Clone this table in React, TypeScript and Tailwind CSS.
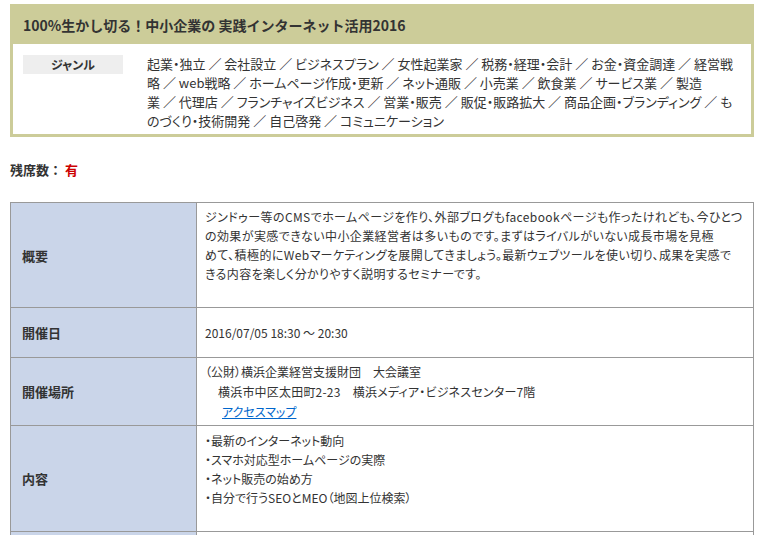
export default function App() {
  const genreLines = [
    "起業・独立 ／ 会社設立 ／ ビジネスプラン ／ 女性起業家 ／ 税務・経理・会計 ／ お金・資金調達 ／ 経営戦",
    "略 ／ web戦略 ／ ホームページ作成・更新 ／ ネット通販 ／ 小売業 ／ 飲食業 ／ サービス業 ／ 製造",
    "業 ／ 代理店 ／ フランチャイズビジネス ／ 営業・販売 ／ 販促・販路拡大 ／ 商品企画・ブランディング ／ も",
    "のづくり・技術開発 ／ 自己啓発 ／ コミュニケーション",
  ];

  const summaryLines = [
    "ジンドゥー等のCMSでホームページを作り、外部ブログもfacebookページも作ったけれども、今ひとつ",
    "の効果が実感できない中小企業経営者は多いものです。まずはライバルがいない成長市場を見極",
    "めて、積極的にWebマーケティングを展開してきましょう。最新ウェブツールを使い切り、成果を実感で",
    "きる内容を楽しく分かりやすく説明するセミナーです。",
  ];

  const contents = [
    "・最新のインターネット動向",
    "・スマホ対応型ホームページの実際",
    "・ネット販売の始め方",
    "・自分で行うSEOとMEO（地図上位検索）",
  ];

  return (
    <div className="min-h-[535px] bg-white px-[10px] pt-[4px] text-[#333] font-['Noto_Sans_CJK_JP',sans-serif] [font-feature-settings:'palt']">
      {/* Seminar header */}
      <section className="w-[744px] border-[3px] border-t-0 border-[#cccc99]">
        <h1 className="h-[40px] bg-[#cccc99] pl-[10px] text-[14px] font-bold leading-[42px] [font-feature-settings:normal]">
          100%生かし切る！中小企業の 実践インターネット活用2016
        </h1>
        <div className="flex bg-white pl-[10px] pt-[10px] pb-[4px]">
          <div className="mt-[1px] h-[19px] w-[100px] shrink-0 bg-[#eeeeee] text-center text-[12px] font-bold leading-[19px]">
            ジャンル
          </div>
          <p className="ml-[24px] text-[13px] leading-[19px]">
            {genreLines.map((line, i) => (
              <span key={i} className="block whitespace-nowrap">
                {line}
              </span>
            ))}
          </p>
        </div>
      </section>

      {/* Seats */}
      <p className="mt-[23px] text-[13px] font-bold leading-[19px] [font-feature-settings:normal]">
        残席数： <span className="text-[#cc0000]">有</span>
      </p>

      {/* Detail table */}
      <table className="mt-[23px] w-[744px] border-collapse text-[12px] leading-[19px]">
        <tbody>
          <tr className="h-[105px]">
            <th className="w-[186px] border border-[#999] bg-[#cad5e9] pl-[11px] text-left align-middle text-[13px] font-bold">
              概要
            </th>
            <td className="border border-[#999] pl-[8px] pt-[4px] align-top tracking-[0.4px]">
              {summaryLines.map((line, i) => (
                <span key={i} className="block whitespace-nowrap">
                  {line}
                </span>
              ))}
            </td>
          </tr>
          <tr className="h-[50px]">
            <th className="border border-[#999] bg-[#cad5e9] pl-[11px] text-left align-middle text-[13px] font-bold">
              開催日
            </th>
            <td className="border border-[#999] pl-[8px] align-middle">
              2016/07/05 18:30 ～ 20:30
            </td>
          </tr>
          <tr className="h-[68px]">
            <th className="border border-[#999] bg-[#cad5e9] pl-[11px] text-left align-middle text-[13px] font-bold">
              開催場所
            </th>
            <td className="border border-[#999] pl-[8px] align-middle leading-[20px]">
              <span className="block">（公財）横浜企業経営支援財団　大会議室</span>
              <span className="block pl-[13px] tracking-[0.2px]">
                横浜市中区太田町2-23　横浜メディア・ビジネスセンター7階
              </span>
              <a href="#" className="block pl-[17px] text-[#0066cc] underline">
                アクセスマップ
              </a>
            </td>
          </tr>
          <tr className="h-[106px]">
            <th className="border border-[#999] bg-[#cad5e9] pl-[11px] text-left align-middle text-[13px] font-bold">
              内容
            </th>
            <td className="border border-[#999] pl-[8px] pt-[5px] align-top">
              {contents.map((line, i) => (
                <span key={i} className="block">
                  {line}
                </span>
              ))}
            </td>
          </tr>
          <tr className="h-[40px]">
            <th className="border border-[#999] bg-[#cad5e9]" />
            <td className="border border-[#999]" />
          </tr>
        </tbody>
      </table>
    </div>
  );
}
